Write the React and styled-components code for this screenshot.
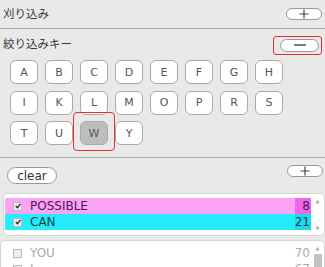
import styled, { createGlobalStyle } from 'styled-components'

const Global = createGlobalStyle`
  html, body { margin: 0; padding: 0; background: #e9e9e9; }
  body { font-family: "DejaVu Sans", "Noto Sans CJK JP", sans-serif; overflow: hidden; }
`

const Page = styled.div`
  width: 325px;
  height: 267px;
  overflow: hidden;
  background: #e9e9e9;
`

const HeaderRow = styled.div`
  display: flex;
  align-items: center;
  justify-content: space-between;
  height: ${(p) => p.h}px;
  padding: 0 3px 0 3px;
  border-bottom: ${(p) => (p.line ? '1px solid #a8a8a8' : 'none')};
`

const Label = styled.span`
  font-family: "Noto Sans CJK JP", sans-serif;
  font-size: 11.5px;
  color: #3a3a3a;
  margin-top: ${(p) => p.mt || 0}px;
`

const PillButton = styled.div`
  width: ${(p) => p.w || 34}px;
  height: ${(p) => p.h || 10}px;
  border: 1px solid #999;
  border-radius: 7px;
  background: #fff;
  display: flex;
  align-items: center;
  justify-content: center;
`

const RedFrame = styled.div`
  border: 1px solid #e03030;
  border-radius: 3px;
  padding: 2px 2px 2px 6px;
  display: flex;
  margin-top: 6px;
`

const KeyGrid = styled.div`
  display: grid;
  grid-template-columns: repeat(8, 28px);
  column-gap: 7px;
  row-gap: 6.5px;
  padding: 5px 0 12px 10px;
`

const Key = styled.div`
  position: relative;
  width: 26px;
  height: 22px;
  border: 1px solid #aaa;
  border-radius: 6px;
  background: ${(p) => (p.active ? '#bdbdbd' : '#fff')};
  color: #555;
  font-size: 11px;
  display: flex;
  align-items: center;
  justify-content: center;

  ${(p) =>
    p.marked &&
    `&::after {
      content: '';
      position: absolute;
      left: -8px;
      right: -8px;
      top: -10px;
      bottom: -7px;
      border: 1px solid #e03030;
      border-radius: 4px;
    }`}
`

const Divider = styled.div`
  height: 1px;
  background: #a8a8a8;
`

const ToolRow = styled.div`
  display: flex;
  justify-content: space-between;
  align-items: flex-start;
  padding: 7px 2px 0 7px;
  height: 28px;
`

const ClearButton = styled.div`
  width: 48px;
  height: 15px;
  border: 1px solid #999;
  border-radius: 9px;
  background: #fff;
  font-size: 12px;
  color: #333;
  display: flex;
  align-items: center;
  justify-content: center;
  margin-top: 2px;
`

const ListBox = styled.div`
  margin: ${(p) => p.m};
  background: #fff;
  border: 1px solid #d4d4d4;
  border-radius: 5px;
  padding: ${(p) => p.pad};
  display: flex;
  height: ${(p) => p.h}px;
`

const Rows = styled.div`
  flex: 1;
  display: flex;
  flex-direction: column;
`

const Row = styled.div`
  display: flex;
  align-items: center;
  height: 16px;
  background: ${(p) => p.bg};
  color: ${(p) => p.fg};
  font-size: 12px;
  flex-shrink: 0;
`

const Check = styled.span`
  width: 7px;
  height: 7px;
  margin: 0 8px 0 8px;
  border: 1px solid #b8b8b8;
  background: #eee;
  display: flex;
  align-items: center;
  justify-content: center;
`

const Name = styled.span`
  flex: 1;
`

const Count = styled.span`
  width: 15px;
  padding-right: 1px;
  height: 100%;
  display: flex;
  align-items: center;
  justify-content: flex-end;
  background: ${(p) => p.bg};
`

const Scroll = styled.div`
  width: 9px;
  margin-left: 2px;
  display: flex;
  flex-direction: column;
  align-items: center;
  color: #aaa;
  font-size: 5px;
`

const Thumb = styled.div`
  width: 8px;
  flex: 1;
  background: #c2c2c2;
  margin-top: 3px;
`

const Plus = () => (
  <svg width="10" height="10" viewBox="0 0 10 10">
    <path d="M5 0.5V9.5M0.5 5H9.5" stroke="#444" strokeWidth="1.2" />
  </svg>
)

const Minus = () => (
  <svg width="12" height="4" viewBox="0 0 12 4">
    <path d="M0 2H12" stroke="#444" strokeWidth="1.4" />
  </svg>
)

const Tick = ({ on }) =>
  on ? (
    <svg width="6" height="6" viewBox="0 0 6 6">
      <path d="M0.8 3L2.5 4.8L5.4 0.8" stroke="#222" strokeWidth="1.3" fill="none" />
    </svg>
  ) : null

const keys = ['A', 'B', 'C', 'D', 'E', 'F', 'G', 'H', 'I', 'K', 'L', 'M', 'O', 'P', 'R', 'S', 'T', 'U', 'W', 'Y']

const App = () => {
  return (
    <Page>
      <Global />
      <HeaderRow h={28} line>
        <Label mt={-3}>刈り込み</Label>
        <PillButton>
          <Plus />
        </PillButton>
      </HeaderRow>
      <HeaderRow h={26}>
        <Label mt={2}>絞り込みキー</Label>
        <RedFrame>
          <PillButton w={37} h={11}>
            <Minus />
          </PillButton>
        </RedFrame>
      </HeaderRow>
      <KeyGrid>
        {keys.map((k) => (
          <Key key={k} active={k === 'W'} marked={k === 'W'}>
            {k}
          </Key>
        ))}
      </KeyGrid>
      <Divider />
      <ToolRow>
        <ClearButton>clear</ClearButton>
        <PillButton>
          <Plus />
        </PillButton>
      </ToolRow>
      <ListBox m="0 0 0 3px" pad="4px 2px 4px 1px" h={33}>
        <Rows>
          <Row bg="#fba3f7" fg="#4a1a4a">
            <Check><Tick on /></Check>
            <Name>POSSIBLE</Name>
            <Count bg="#ee66ee">8</Count>
          </Row>
          <Row bg="#24ecfb" fg="#0b3f4a">
            <Check><Tick on /></Check>
            <Name>CAN</Name>
            <Count bg="#1cdcec">21</Count>
          </Row>
        </Rows>
        <Scroll>
          <span>▲</span>
          <div style={{ flex: 1 }} />
          <span>▼</span>
        </Scroll>
      </ListBox>
      <ListBox m="4px 0 0 0" pad="4px 2px 4px 4px" h={40}>
        <Rows>
          <Row bg="#fff" fg="#aaa">
            <Check><Tick /></Check>
            <Name>YOU</Name>
            <Count bg="#fff">70</Count>
          </Row>
          <Row bg="#fff" fg="#aaa">
            <Check><Tick /></Check>
            <Name>I</Name>
            <Count bg="#fff">67</Count>
          </Row>
        </Rows>
        <Scroll>
          <span>▲</span>
          <Thumb />
        </Scroll>
      </ListBox>
    </Page>
  )
}

export default App
